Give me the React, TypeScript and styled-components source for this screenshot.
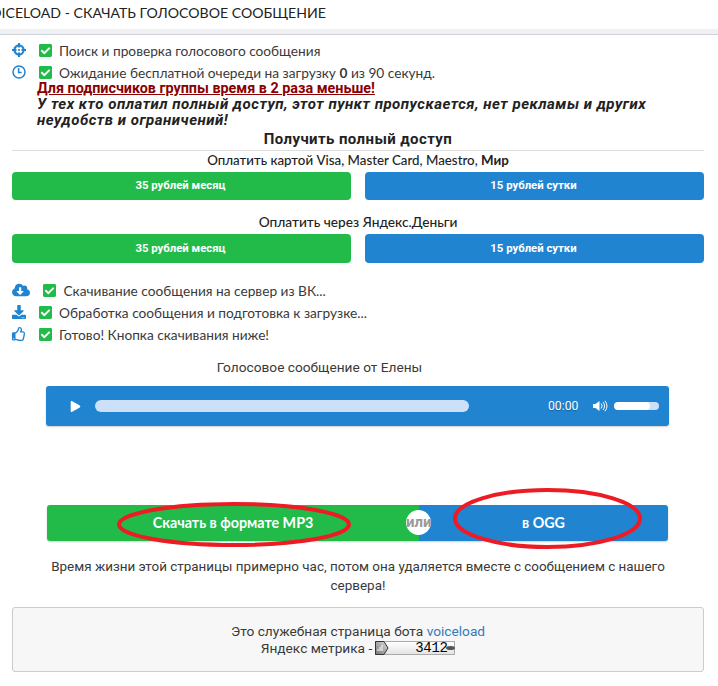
import React from "react";
import styled, { createGlobalStyle } from "styled-components";
import { FaCloudDownloadAlt, FaDownload, FaRegThumbsUp, FaCheckSquare, FaPlay } from "react-icons/fa";

const Global = createGlobalStyle`
  html, body { margin: 0; padding: 0; background: #fff; }
  body { font-family: Lato, Roboto, "Noto Sans", sans-serif; font-size: 13.7px; color: #3a3a3a; overflow: hidden; }
`;
const Page = styled.div`width: 718px; height: 686px; overflow: hidden;`;
const Header = styled.header`height: 27px; padding-top: 2px; overflow: hidden;`;
const HeaderTitle = styled.h1`
  margin: 0 0 0 -19px; font: 400 14.1px/22px Lato, Roboto, sans-serif; color: #222; white-space: nowrap; text-transform: uppercase;
`;
const HeaderRule = styled.div`height: 5px; background: linear-gradient(#eef0f3, #f0f1f3); border-bottom: 1px solid #cfd1d4;`;
const Content = styled.main`padding: 4px 14px 0 12px;`;
const Row = styled.div<{ $mt?: number }>`
  display: flex; align-items: center; height: 22px; margin-top: ${p => p.$mt ?? 0}px; white-space: nowrap;
`;
const RowIcon = styled.span<{ $w: number }>`
  width: ${p => p.$w}px; flex: none; display: flex; align-items: center; color: #2184d0; font-size: 14px;
`;
const LineIcon = styled.svg`display: block; flex: none;`;
const Check = styled(FaCheckSquare)`color: #22bb4a; font-size: 15px; width: 13px; flex: none; margin-right: 7.5px;`;
const Promo = styled.a`display: block; font: 700 14.35px/16px Roboto, sans-serif; color: #8b0000; text-decoration: underline; margin: -2px 0 0 25px;`;
const Note = styled.p`margin: 0 0 0 25px; font: italic 700 15px/15.5px Roboto, sans-serif; letter-spacing: .52px; color: #222; width: 640px;`;
const Heading = styled.h2`
  margin: 1px 0 0; height: 19px; font: 700 15px/20px Roboto, sans-serif; color: #222; text-align: center; letter-spacing: .4px;
  padding-bottom: 2px; border-bottom: 1px solid #ddd; box-sizing: content-box;
`;
const PayLabel = styled.div<{ $mt?: number; $size: number }>`
  text-align: center; font: 500 ${p => p.$size}px/18px Lato, Roboto, sans-serif; color: #222; margin-top: ${p => p.$mt ?? 0}px;
`;
const PayRow = styled.div`display: grid; grid-template-columns: 339px 339px; column-gap: 14px; margin-top: 3px;`;
const PayButton = styled.button<{ $bg: string; $h: number }>`
  height: ${p => p.$h}px; border: 0; border-radius: 4px; background: ${p => p.$bg}; color: #fff;
  font: 700 11.35px/1 Roboto, sans-serif; padding: 0 2px 0 0;
`;
const Caption = styled.div`text-align: center; font: 400 13.7px/18px Roboto, sans-serif; margin-top: 13px; padding-right: 77px;`;
const Player = styled.div`
  margin: 10px 0 0 34px; width: 623px; height: 40px; background: #2184d0; border-radius: 3px;
  box-shadow: 0 1px 2px rgba(0,0,0,.2); display: flex; align-items: center; color: #fff;
`;
const PlayBtn = styled(FaPlay)`font-size: 11px; margin-left: 24px; flex: none;`;
const Track = styled.div`width: 374px; height: 12px; border-radius: 6px; background: #cce0fa; margin-left: 14px; flex: none;`;
const Time = styled.span`font: 400 12.2px Roboto, sans-serif; margin-left: 79px; width: 31px; text-shadow: 0 1px 1px rgba(0,0,0,.3);`;
const VolIcon = styled.svg`margin-left: 14px; flex: none;`;
const VolBar = styled.div`width: 45px; height: 8px; margin-left: 6px; border-radius: 4px; background: #cce0fa; overflow: hidden;`;
const VolFill = styled.div`height: 100%; border-radius: 4px; background: #fff;`;
const DownloadWrap = styled.div`position: relative; margin: 79px 0 0 35px; width: 621px; height: 36px;`;
const DownloadBar = styled.div`
  display: grid; grid-template-columns: 372px 249px; height: 36px; border-radius: 3px; overflow: hidden;
  box-shadow: 0 1px 2px rgba(0,0,0,.2);
`;
const DownloadPart = styled.a<{ $bg: string }>`
  background: ${p => p.$bg}; color: #fff; display: flex; align-items: center; justify-content: center;
  font: 700 14.3px/1 Lato, Roboto, sans-serif;
`;
const OrBadge = styled.span`
  position: absolute; left: 359px; top: 5px; width: 25px; height: 25px; border-radius: 50%; background: #fff; color: #999;
  font: 700 15px/25px Roboto, sans-serif; text-align: center;
`;
const Ellipse = styled.svg`position: absolute; overflow: visible; pointer-events: none;`;
const LifeText = styled.p`margin: 16px 0 0; text-align: center; font: 400 13.45px/19px Roboto, sans-serif; padding: 0 20px;`;
const FooterBox = styled.footer`
  margin-top: 12px; height: 63px; border: 1px solid #ccc; border-radius: 3px; background: #f7f7f7;
  text-align: center; font: 400 13.7px/17px Roboto, sans-serif;
  display: flex; flex-direction: column; justify-content: center;
`;
const FooterLine = styled.div`display: flex; justify-content: center; align-items: center; height: 17px; gap: 3px;`;
const BotLink = styled.a`color: #337ab7;`;
const Counter = styled.span`
  width: 80px; height: 14px; box-sizing: border-box; border: 1px solid #aaa; border-left: 0; display: flex; align-items: center;
  background: linear-gradient(#fff, #e4e4e4);
`;
const CounterTag = styled.svg`flex: none; display: block;`;
const CounterNum = styled.span`font: 400 14px/12px "Liberation Mono", monospace; color: #000; letter-spacing: -.3px; margin-left: 26px; width: 31px;`;
const CounterEye = styled.svg`flex: none;`;

const CrosshairIcon = () => (
  <LineIcon width="14" height="14" viewBox="0 0 14 14" fill="none">
    <circle cx="7" cy="7" r="4.6" stroke="currentColor" strokeWidth="2.2" />
    <path d="M7 0v4.5M7 9.5V14M0 7h4.5M9.5 7H14" stroke="currentColor" strokeWidth="2" />
    <circle cx="7" cy="7" r="1" fill="currentColor" />
  </LineIcon>
);
const ClockIcon = () => (
  <LineIcon width="14" height="14" viewBox="0 0 14 14" fill="none">
    <circle cx="7" cy="7" r="6" stroke="currentColor" strokeWidth="1.5" />
    <path d="M6.6 3v4.6h3" stroke="currentColor" strokeWidth="1.5" />
  </LineIcon>
);

export default function App() {
  return (
    <Page>
      <Global />
      <Header><HeaderTitle>Voiceload - скачать голосовое сообщение</HeaderTitle></Header>
      <HeaderRule />
      <Content>
        <Row><RowIcon $w={26.5}><CrosshairIcon /></RowIcon><Check />Поиск и проверка голосового сообщения</Row>
        <Row><RowIcon $w={26.5}><ClockIcon /></RowIcon><Check /><span>Ожидание бесплатной очереди на загрузку <b>0</b> из 90 секунд.</span></Row>
        <Promo>Для подписчиков группы время в 2 раза меньше!</Promo>
        <Note>У тех кто оплатил полный доступ, этот пункт пропускается, нет рекламы и других неудобств и ограничений!</Note>
        <Heading>Получить полный доступ</Heading>
        <PayLabel $size={13.3}>Оплатить картой Visa, Master Card, Maestro, <b>Мир</b></PayLabel>
        <PayRow><PayButton $bg="#22bb4a" $h={28}>35 рублей месяц</PayButton><PayButton $bg="#2184d0" $h={28}>15 рублей сутки</PayButton></PayRow>
        <PayLabel $mt={13} $size={13.7}>Оплатить через Яндекс.Деньги</PayLabel>
        <PayRow><PayButton $bg="#22bb4a" $h={29}>35 рублей месяц</PayButton><PayButton $bg="#2184d0" $h={29}>15 рублей сутки</PayButton></PayRow>
        <Row $mt={16}><RowIcon $w={31}><FaCloudDownloadAlt size={18} /></RowIcon><Check />Скачивание сообщения на сервер из ВК...</Row>
        <Row><RowIcon $w={26.5}><FaDownload /></RowIcon><Check />Обработка сообщения и подготовка к загрузке...</Row>
        <Row><RowIcon $w={26.5}><FaRegThumbsUp /></RowIcon><Check />Готово! Кнопка скачивания ниже!</Row>
        <Caption>Голосовое сообщение от Елены</Caption>
        <Player>
          <PlayBtn />
          <Track />
          <Time>00:00</Time>
          <VolIcon width="15" height="12" viewBox="0 0 15 12" fill="none">
            <path d="M0 4h2.5L6.5 1v10L2.5 8H0z" fill="#fff" />
            <path d="M8 3.5a3.5 3.5 0 0 1 0 5M10 2a6 6 0 0 1 0 8M12 .8a8.5 8.5 0 0 1 0 10.4" stroke="#fff" strokeWidth="1" />
          </VolIcon>
          <VolBar><VolFill style={{ width: "80%" }} /></VolBar>
        </Player>
        <DownloadWrap>
          <DownloadBar>
            <DownloadPart $bg="#22bb4a">Скачать в формате MP3</DownloadPart>
            <DownloadPart $bg="#2184d0">в OGG</DownloadPart>
          </DownloadBar>
          <OrBadge>или</OrBadge>
          <Ellipse style={{ left: 70, top: -3, width: 234, height: 45 }} viewBox="0 0 234 45">
            <ellipse cx="117" cy="22.5" rx="115" ry="20.5" fill="none" stroke="#ed1c24" strokeWidth="4" />
          </Ellipse>
          <Ellipse style={{ left: 406, top: -17, width: 189, height: 61 }} viewBox="0 0 189 61">
            <ellipse cx="94.5" cy="30.5" rx="92.5" ry="28.5" fill="none" stroke="#ed1c24" strokeWidth="4" />
          </Ellipse>
        </DownloadWrap>
        <LifeText>Время жизни этой страницы примерно час, потом она удаляется вместе с сообщением с нашего сервера!</LifeText>
        <FooterBox>
          <div>Это служебная страница бота <BotLink>voiceload</BotLink></div>
          <FooterLine>Яндекс метрика -
            <Counter>
              <CounterTag width="14" height="14" viewBox="0 0 14 14">
                <defs>
                  <linearGradient id="tagFill" x1="0" y1="1" x2="1" y2="0">
                    <stop offset="0" stopColor="#777" />
                    <stop offset="1" stopColor="#ddd" />
                  </linearGradient>
                </defs>
                <path d="M.5.5h8.5l4 6.5-4 6.5H.5z" fill="url(#tagFill)" stroke="#333" />
                <path d="M3 10V8M5 10V6M7 10V4" stroke="#fff" />
              </CounterTag>
              <CounterNum>3412</CounterNum>
              <CounterEye width="9" height="6" viewBox="0 0 9 6"><ellipse cx="4.5" cy="3" rx="4.5" ry="2" fill="#555" /></CounterEye>
            </Counter>
          </FooterLine>
        </FooterBox>
      </Content>
    </Page>
  );
}
